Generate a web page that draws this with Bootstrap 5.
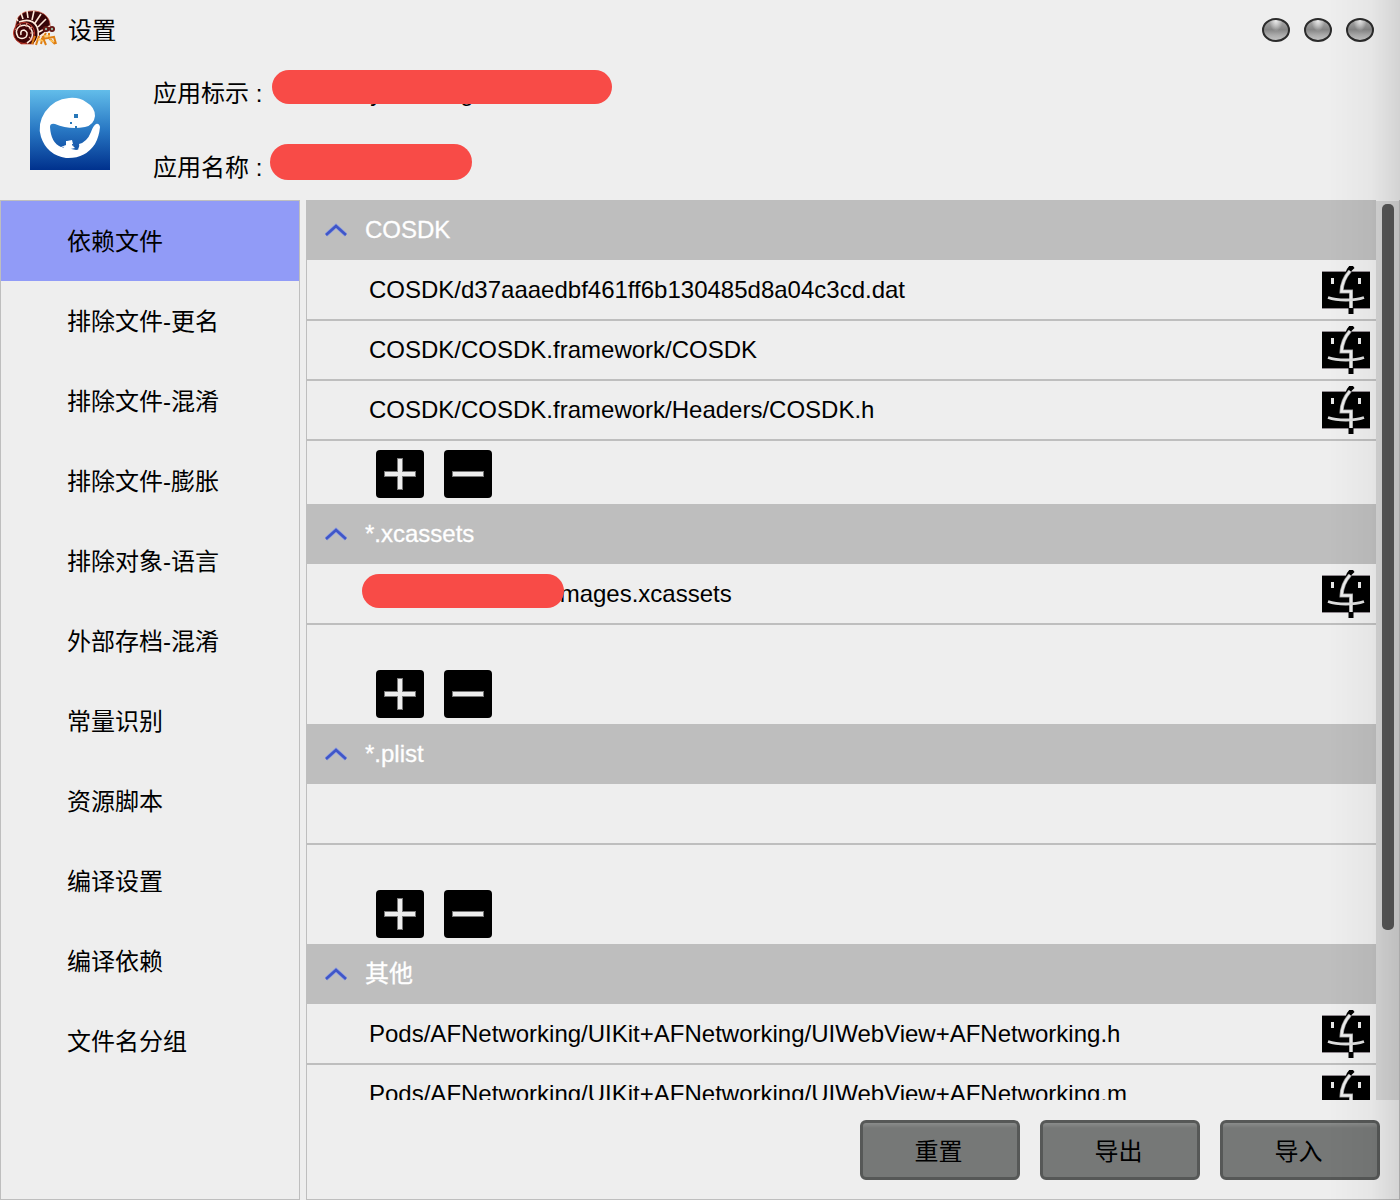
<!DOCTYPE html>
<html lang="zh-CN">
<head>
<meta charset="utf-8">
<meta name="viewport" content="width=device-width, initial-scale=1">
<title>设置</title>
<link href="https://cdn.jsdelivr.net/npm/bootstrap@5.3.0/dist/css/bootstrap.min.css" rel="stylesheet">
<style>
body{background:#eee;color:#000;font:24px/36px "Liberation Sans","Noto Sans CJK SC",sans-serif}
.edge-shade{position:fixed;inset:0 0 0 auto;width:72px;pointer-events:none;z-index:5;background:linear-gradient(90deg,rgba(0,0,0,0),rgba(0,0,0,.03) 60%,rgba(0,0,0,.11))}
.title-bar{height:60px;padding:0 26px 0 12px}
.title-bar h1{font-size:24px;line-height:36px;font-weight:400;padding:2px 0 0 10px}
.orbs{gap:14px}
.orb{width:28px;height:24px;border:2px solid #2b2b2b;border-radius:50%;padding:0;background:radial-gradient(ellipse at 50% 0,#eee 0,rgba(238,238,238,0) 40%),linear-gradient(#aaa,#858585 48%,#aaa 75%,#c2c2c2)}
.app-info{height:140px;padding:10px 30px;gap:43px}
.app-icon{margin-top:20px}
.app-info dl{height:114px}
.app-info dt{font-weight:400;padding-top:6px;height:40px}
.redact{background:#f84b47;border-radius:18px;height:34px}
.redact-id{width:340px;top:0;left:0}
.redact-name{width:202px;height:36px;margin-left:8px}
.redact-path{width:202px;left:55px;top:9px}
.id-value{width:340px;height:34px;margin-left:10px}
.id-value span{line-height:46px;padding-left:98px}
.id-value span + span{padding-left:78px}
.side-menu{width:300px;border:1px solid #bebebe;margin-right:6px}
.side-menu .nav-link{height:80px;padding:23px 0 0 66px;color:#000;line-height:36px}
.side-menu .nav-link.active{background:#919bf7}
.panel{border:solid #bebebe;border-width:0 1px 1px}
.group-head{height:60px;background:#bebebe;color:#fff;border:0;padding:0 18px;gap:18px;text-align:left;-webkit-text-stroke:.3px #fff}
.files{min-height:106px;padding:1px 0 9px}
.file-row{height:60px;border-bottom:2px solid #bebebe;padding:0 6px 0 62px}
.partly{padding-left:184px}
.icon-btn{border:0;padding:0;background:none;display:flex}
.tools{gap:20px;padding:0 0 6px 69px}
.track{width:23px;background:#d6d6d6;padding:3px 5px 0 6px;margin-top:1px}
.thumb{height:81%;background:#575757;border-radius:5px}
.actions{height:99px;padding:20px 19px 19px;gap:20px}
.push{width:160px;height:60px;border:3px solid #565857;border-radius:6px;background:linear-gradient(#8a8c8b,#767877 5px);color:#000;padding:3px 3px 0 0;font-size:24px;line-height:36px}
</style>
<script defer src="https://cdn.jsdelivr.net/npm/bootstrap@5.3.0/dist/js/bootstrap.bundle.min.js"></script>
</head>
<body class="vh-100 d-flex flex-column overflow-hidden">
<svg class="d-none" aria-hidden="true">
  <symbol id="finder" viewBox="0 0 48 48">
    <path d="M0 6H48V42H0Z"/><path d="M0 5.500H48M0 42.500H48" stroke="#918a90"/>
    <path d="M31 0Q27 3 26 7M29 41V48" fill="none" stroke="#000" stroke-width="5"/>
    <path d="M28 5Q20 14 19.500 25.500H29V42" fill="none" stroke="#999" stroke-width="4"/>
    <path d="M28 5Q20 14 19.500 25.500H29V42" fill="none" stroke="#eee" stroke-width="2.500"/>
    <path d="M6 31.500Q13 34 24 34Q35 34 42 31.500" fill="none" stroke="#ddd" stroke-width="2.800"/>
    <path d="M10.500 12V18M37.500 12V18" stroke="#e8e8e8" stroke-width="3"/>
  </symbol>
  <symbol id="plus" viewBox="0 0 48 48"><rect width="48" height="48" rx="4"/><path d="M8 24H40M24 8V40" stroke="#777" stroke-width="6"/><path d="M9 24H39M24 9V39" stroke="#eee" stroke-width="4"/></symbol>
  <symbol id="minus" viewBox="0 0 48 48"><rect width="48" height="48" rx="4"/><path d="M8 24H40" stroke="#777" stroke-width="6"/><path d="M9 24H39" stroke="#eee" stroke-width="4"/></symbol>
  <symbol id="chev" viewBox="0 0 22 16"><path d="M1 13L11 4L21 13" fill="none" stroke="#8d9de0" stroke-width="4"/><path d="M1 13L11 4L21 13" fill="none" stroke="#3f56c8" stroke-width="2.500"/></symbol>
</svg>
<div class="edge-shade"></div>
<header>
  <div class="title-bar d-flex align-items-center">
    <svg class="flex-shrink-0" width="46" height="40" viewBox="0 0 46 40" aria-hidden="true">
      <path d="M4 14Q5 5 13 2Q24 -1 32 4Q39 9 38 18L32 23L26 29L22 34H9Q2 29 2 22Z" fill="#360508" stroke="#c84a35" stroke-width=".7"/>
      <path d="M7 12Q20 7 25 17Q29 26 22 34M6 11L4 8M11 9L9 3M16 8L15 1M20 10L22 1M23 13L29 4M26 17L34 9M27 22L38 16M27 27L34 22" fill="none" stroke="#ffe9da" stroke-width="1.600"/>
      <circle cx="12" cy="23" r="10.500" fill="#410507" stroke="#c7392a"/>
      <path d="M9 25Q8 20 12 20Q17 22 14 27Q10 30 6 27Q2 20 8 16Q17 13 20 21Q22 29 15 33" fill="none" stroke="#fff1e4" stroke-width="1.500"/>
      <path d="M3 19L6 20M8 14L9 17M15 13L14 17M20 17L17 19M22 23L18 23M20 30L17 27" stroke="#e0a090" stroke-width="1.200"/>
      <path d="M23 26L20 34M27 26L24 35M31 26L29 34M34 23L31 28L34 35M37 23L37 28L43 34M29 29L36 28L42 27L44 34" fill="none" stroke="#df7f12" stroke-width="2"/>
      <path d="M26 29L31 31M32 26L38 26M38 30L42 32" stroke="#ffc45a" stroke-width="1.700"/>
      <ellipse cx="34" cy="19" rx="3.500" ry="3" fill="#651512"/><ellipse cx="40" cy="19" rx="3" ry="3" fill="#651512"/>
      <circle cx="34" cy="19" r="1.200" fill="#99bba5"/><circle cx="40" cy="19" r="1.200" fill="#99bba5"/>
    </svg>
    <h1 class="mb-0">设置</h1>
    <div class="orbs ms-auto d-flex">
      <button class="orb" type="button" aria-label="最小化"></button>
      <button class="orb" type="button" aria-label="最大化"></button>
      <button class="orb" type="button" aria-label="关闭"></button>
    </div>
  </div>
  <div class="app-info d-flex">
    <svg class="app-icon flex-shrink-0" width="80" height="80" viewBox="0 0 80 80" aria-hidden="true">
      <defs><linearGradient id="sky" x2="0" y2="1"><stop stop-color="#62bdea"/><stop offset=".5" stop-color="#2877c3"/><stop offset="1" stop-color="#00318d"/></linearGradient></defs>
      <path fill="url(#sky)" d="M0 0H80V80H0Z"/>
      <path fill="#fff" d="M65 26Q65 17 56 12Q49 7 39 8Q24 9 15 22Q7 34 11 47Q17 65 36 68Q55 69 65 54Q69 47 70 37Q69 33 66 34Q63 36 61 42Q57 52 49 54Q50 57 47 60Q43 57 43 54L42 50L37 51L36 55L31 57Q21 53 20 37Q20 33 25 34Q39 40 55 37Q64 35 65 26Z"/>
      <path fill="#2877b8" d="M44 24H48V28H44ZM40 32H42V34H40ZM45 36H47V39H45Z"/>
      <path fill="#1b5eac" d="M36 55L43 54L44 57L49 59L46 60L37 58L32 58Z"/>
      <path fill="#fff" d="M36 51H42V55L45 58L36 60L33 57L36 55Z"/>
    </svg>
    <dl class="d-flex flex-column justify-content-between mb-0">
      <div class="d-flex"><dt>应用标示 :</dt><dd class="id-value position-relative mb-0"><span>y</span><span>g</span><i class="redact redact-id position-absolute"></i></dd></div>
      <div class="d-flex"><dt>应用名称 :</dt><dd class="mb-0"><div class="redact redact-name"></div></dd></div>
    </dl>
  </div>
</header>
<main class="d-flex flex-grow-1" style="min-height:0">
  <nav class="side-menu nav flex-column flex-nowrap flex-shrink-0">
    <a class="nav-link active" href="#">依赖文件</a>
    <a class="nav-link" href="#">排除文件-更名</a>
    <a class="nav-link" href="#">排除文件-混淆</a>
    <a class="nav-link" href="#">排除文件-膨胀</a>
    <a class="nav-link" href="#">排除对象-语言</a>
    <a class="nav-link" href="#">外部存档-混淆</a>
    <a class="nav-link" href="#">常量识别</a>
    <a class="nav-link" href="#">资源脚本</a>
    <a class="nav-link" href="#">编译设置</a>
    <a class="nav-link" href="#">编译依赖</a>
    <a class="nav-link" href="#">文件名分组</a>
  </nav>
  <section class="panel d-flex flex-column flex-grow-1" style="min-width:0">
    <div class="d-flex flex-grow-1" style="min-height:0">
      <div class="flex-grow-1 overflow-hidden">
        <button class="group-head d-flex align-items-center w-100" type="button"><svg width="22" height="16"><use href="#chev"/></svg>COSDK</button>
        <div class="files">
          <div class="file-row d-flex align-items-center justify-content-between">COSDK/d37aaaedbf461ff6b130485d8a04c3cd.dat<button class="icon-btn" type="button" aria-label="在访达中显示"><svg width="48" height="48"><use href="#finder"/></svg></button></div>
          <div class="file-row d-flex align-items-center justify-content-between">COSDK/COSDK.framework/COSDK<button class="icon-btn" type="button" aria-label="在访达中显示"><svg width="48" height="48"><use href="#finder"/></svg></button></div>
          <div class="file-row d-flex align-items-center justify-content-between">COSDK/COSDK.framework/Headers/COSDK.h<button class="icon-btn" type="button" aria-label="在访达中显示"><svg width="48" height="48"><use href="#finder"/></svg></button></div>
        </div>
        <div class="tools d-flex"><button class="icon-btn" type="button" aria-label="添加"><svg width="48" height="48"><use href="#plus"/></svg></button><button class="icon-btn" type="button" aria-label="移除"><svg width="48" height="48"><use href="#minus"/></svg></button></div>

        <button class="group-head d-flex align-items-center w-100" type="button"><svg width="22" height="16"><use href="#chev"/></svg>*.xcassets</button>
        <div class="files">
          <div class="file-row d-flex align-items-center justify-content-between position-relative"><span class="partly">Images.xcassets</span><i class="redact redact-path position-absolute"></i><button class="icon-btn" type="button" aria-label="在访达中显示"><svg width="48" height="48"><use href="#finder"/></svg></button></div>
        </div>
        <div class="tools d-flex"><button class="icon-btn" type="button" aria-label="添加"><svg width="48" height="48"><use href="#plus"/></svg></button><button class="icon-btn" type="button" aria-label="移除"><svg width="48" height="48"><use href="#minus"/></svg></button></div>

        <button class="group-head d-flex align-items-center w-100" type="button"><svg width="22" height="16"><use href="#chev"/></svg>*.plist</button>
        <div class="files"><div class="file-row"></div></div>
        <div class="tools d-flex"><button class="icon-btn" type="button" aria-label="添加"><svg width="48" height="48"><use href="#plus"/></svg></button><button class="icon-btn" type="button" aria-label="移除"><svg width="48" height="48"><use href="#minus"/></svg></button></div>

        <button class="group-head d-flex align-items-center w-100" type="button"><svg width="22" height="16"><use href="#chev"/></svg>其他</button>
        <div class="files">
          <div class="file-row d-flex align-items-center justify-content-between">Pods/AFNetworking/UIKit+AFNetworking/UIWebView+AFNetworking.h<button class="icon-btn" type="button" aria-label="在访达中显示"><svg width="48" height="48"><use href="#finder"/></svg></button></div>
          <div class="file-row d-flex align-items-center justify-content-between">Pods/AFNetworking/UIKit+AFNetworking/UIWebView+AFNetworking.m<button class="icon-btn" type="button" aria-label="在访达中显示"><svg width="48" height="48"><use href="#finder"/></svg></button></div>
        </div>
      </div>
      <div class="track flex-shrink-0"><div class="thumb"></div></div>
    </div>
    <div class="actions d-flex justify-content-end flex-shrink-0">
      <button class="push" type="button">重置</button>
      <button class="push" type="button">导出</button>
      <button class="push" type="button">导入</button>
    </div>
  </section>
</main>
</body>
</html>
